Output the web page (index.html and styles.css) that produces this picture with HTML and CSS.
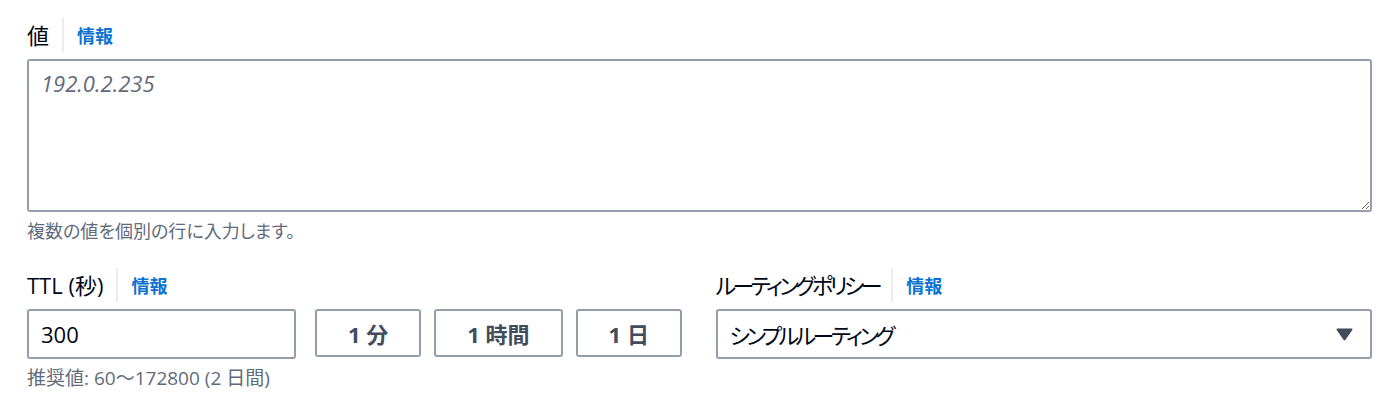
FILE: index.html
```html
<!DOCTYPE html>
<html lang="ja">
<head>
    <meta charset="UTF-8">
    <meta name="viewport" content="width=device-width, initial-scale=1.0">
    <title>レコードの値</title>
    <link rel="stylesheet" href="styles.css">
</head>
<body>
    <div class="page">
        <!-- 値 -->
        <div class="field">
            <div class="field-label">
                <span class="label-text">値</span>
                <a class="info-link" href="#">情報</a>
            </div>
            <textarea class="value-input" placeholder="192.0.2.235"></textarea>
            <div class="help-text">複数の値を個別の行に入力します。</div>
        </div>

        <div class="field-grid">
            <!-- TTL -->
            <div class="field">
                <div class="field-label">
                    <span class="label-text">TTL (秒)</span>
                    <a class="info-link" href="#">情報</a>
                </div>
                <div class="ttl-row">
                    <input type="text" class="ttl-input" value="300">
                    <button class="preset-btn">1 分</button>
                    <button class="preset-btn">1 時間</button>
                    <button class="preset-btn">1 日</button>
                </div>
                <div class="help-text hint">推奨値: 60～172800 (2 日間)</div>
            </div>

            <!-- ルーティングポリシー -->
            <div class="field">
                <div class="field-label">
                    <span class="label-text kana-label">ルーティングポリシー</span>
                    <a class="info-link" href="#">情報</a>
                </div>
                <div class="select-box">
                    <span class="kana-value">シンプルルーティング</span>
                    <svg class="caret" width="17" height="13" viewBox="0 0 17 13">
                        <path d="M1.5 1.5 L15.5 1.5 L8.5 11.5 Z" fill="#414d5c" stroke="#414d5c" stroke-width="2" stroke-linejoin="round"/>
                    </svg>
                </div>
            </div>
        </div>
    </div>
</body>
</html>
```

FILE: styles.css
```css
body {
    margin: 0;
    font-family: "Open Sans", "Noto Sans CJK JP", sans-serif;
    font-feature-settings: "palt";
    color: #000716;
    background: #ffffff;
}
.page {
    padding: 18px 28px 0 27px;
}
.field-label {
    display: flex;
    align-items: center;
    height: 34px;
    margin-bottom: 7px;
}
.label-text {
    font-size: 22px;
    line-height: 34px;
    padding-right: 13px;
    border-right: 2px solid #eaeded;
}
.kana-label {
    letter-spacing: -3.5px;
    padding-right: 12px;
}
.info-link {
    font-size: 18px;
    font-weight: 700;
    color: #0972d3;
    text-decoration: none;
    margin-left: 13px;
}
.value-input {
    display: block;
    box-sizing: border-box;
    width: 100%;
    height: 153px;
    margin: 0;
    padding: 6px 12px;
    border: 2px solid #959fab;
    border-radius: 3px;
    font-family: inherit;
    font-size: 22px;
    line-height: 33px;
    color: #000716;
    resize: vertical;
}
.value-input::placeholder {
    font-style: italic;
    color: #5f6b7a;
}
.help-text {
    margin-top: 7px;
    font-size: 18px;
    line-height: 24px;
    color: #5f6b7a;
}
.hint {
    font-size: 19px;
}
.field-grid {
    display: grid;
    grid-template-columns: 1fr 1fr;
    gap: 32px;
    margin-top: 25px;
}
.ttl-row {
    display: flex;
    align-items: flex-start;
    gap: 13px;
}
.ttl-input {
    box-sizing: border-box;
    flex-shrink: 0;
    width: 269px;
    height: 50px;
    margin: 0 6px 0 0;
    padding: 0 12px;
    border: 2px solid #959fab;
    border-radius: 3px;
    font-family: inherit;
    font-size: 22px;
    color: #000716;
}
.preset-btn {
    box-sizing: border-box;
    flex-shrink: 0;
    white-space: nowrap;
    height: 48px;
    padding: 0 31px;
    border: 2px solid #959fab;
    border-radius: 3px;
    background: #ffffff;
    font-family: inherit;
    font-feature-settings: "palt";
    font-size: 22px;
    font-weight: 700;
    color: #414d5c;
    cursor: pointer;
}
.select-box {
    box-sizing: border-box;
    display: flex;
    align-items: center;
    justify-content: space-between;
    height: 50px;
    padding: 0 17px 0 12px;
    border: 2px solid #959fab;
    border-radius: 3px;
    font-size: 22px;
    color: #000716;
}
.kana-value {
    letter-spacing: -3.5px;
}
.caret {
    display: block;
}
```
